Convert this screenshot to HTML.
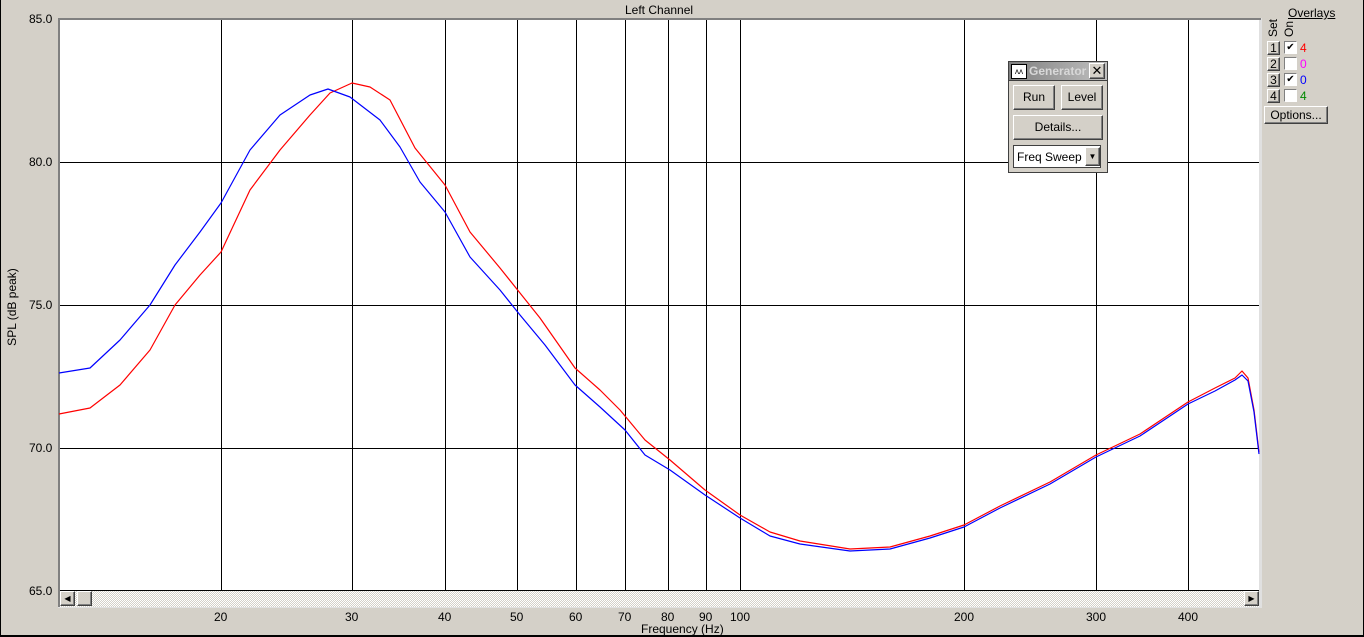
<!DOCTYPE html>
<html><head><style>
body{margin:0;width:1364px;height:637px;background:#d4d0c8;position:relative;overflow:hidden;font-family:"Liberation Sans",sans-serif;font-size:12px;color:#000}
.a{position:absolute}
.btn{position:absolute;background:#d4d0c8;border:1px solid;border-color:#fff #404040 #404040 #fff;box-shadow:inset -1px -1px 0 #808080;text-align:center;font-size:12px}
.cb{position:absolute;width:11px;height:11px;background:#fff;border:1px solid;border-color:#808080 #fff #fff #808080;font-size:10px;line-height:11px;text-align:center}
.lab{position:absolute;font-size:12px}
</style></head><body>
<div class="a" style="left:0;top:0;width:1px;height:637px;background:#000"></div>
<div class="a" style="left:0;top:635px;width:1364px;height:2px;background:#000"></div>
<div class="a" style="left:1363px;top:0;width:1px;height:637px;background:#000"></div>
<div class="lab" style="left:625px;top:3px">Left Channel</div>
<div class="lab" style="left:29px;top:12px">85.0</div>
<div class="lab" style="left:29px;top:155px">80.0</div>
<div class="lab" style="left:29px;top:298px">75.0</div>
<div class="lab" style="left:29px;top:441px">70.0</div>
<div class="lab" style="left:29px;top:584px">65.0</div>
<div class="lab" style="left:-38px;top:300px;transform:rotate(-90deg);width:100px;text-align:center">SPL (dB peak)</div>
<svg class="a" style="left:58px;top:18px" width="1204" height="590" viewBox="58 18 1204 590">
<defs><pattern id="dots" width="2" height="2" patternUnits="userSpaceOnUse"><rect width="2" height="2" fill="#d4d0c8"/><rect width="1" height="1" fill="#fff"/><rect x="1" y="1" width="1" height="1" fill="#fff"/></pattern></defs>
<rect x="58" y="18" width="1204" height="590" fill="#e0e0e0"/>
<rect x="60" y="20" width="1199" height="571" fill="#fff"/>
<rect x="58" y="18" width="1203" height="2" fill="#808080"/>
<rect x="58" y="18" width="2" height="589" fill="#808080"/>
<g stroke="#000" stroke-width="1">
<line x1="60" x2="1259" y1="162.5" y2="162.5"/><line x1="60" x2="1259" y1="305.5" y2="305.5"/><line x1="60" x2="1259" y1="448.5" y2="448.5"/><line x1="60" x2="1259" y1="590.5" y2="590.5"/>
<line x1="221.5" x2="221.5" y1="20" y2="591"/><line x1="352.5" x2="352.5" y1="20" y2="591"/><line x1="445.5" x2="445.5" y1="20" y2="591"/><line x1="517.5" x2="517.5" y1="20" y2="591"/><line x1="576.5" x2="576.5" y1="20" y2="591"/><line x1="625.5" x2="625.5" y1="20" y2="591"/><line x1="668.5" x2="668.5" y1="20" y2="591"/><line x1="706.5" x2="706.5" y1="20" y2="591"/><line x1="740.5" x2="740.5" y1="20" y2="591"/><line x1="964.5" x2="964.5" y1="20" y2="591"/><line x1="1096.5" x2="1096.5" y1="20" y2="591"/><line x1="1188.5" x2="1188.5" y1="20" y2="591"/>
</g>
<polyline fill="none" stroke="#f00" stroke-width="1.2" stroke-linejoin="round" points="59,414 90,408 120,385 150,350 175,305 200,275 221,252 250,190 280,150 310,115 330,93 352,83 370,87 390,100 415,148 445,185 470,232 500,268 520,293 540,318 575,368 600,390 620,410 645,440 670,460 705,490 740,515 770,532 800,541 850,549 890,547 930,536 964,525 1000,506 1050,482 1096,455 1140,434 1188,402 1215,388 1235,378 1242,371 1248,378 1254,410 1259,452"/>
<polyline fill="none" stroke="#00f" stroke-width="1.2" stroke-linejoin="round" points="59,373 90,368 120,340 150,305 175,265 200,232 221,203 250,150 280,115 310,95 328,89 350,97 380,120 400,147 420,182 445,212 470,257 500,290 520,315 545,345 575,385 600,407 625,430 645,455 670,470 705,495 740,518 770,536 800,544 850,551 890,549 930,538 964,527 1000,508 1050,484 1096,457 1140,436 1188,404 1215,391 1235,380 1242,375 1248,381 1254,412 1259,454"/>
<rect x="60" y="591" width="1199" height="16" fill="url(#dots)"/>
</svg>
<div class="btn" style="left:60px;top:591px;width:13px;height:13px;font-size:8px;line-height:13px">◀</div>
<div class="btn" style="left:77px;top:591px;width:13px;height:13px"></div>
<div class="btn" style="left:1244px;top:591px;width:13px;height:13px;font-size:8px;line-height:13px">▶</div>
<div class="lab" style="left:214px;top:610px">20</div>
<div class="lab" style="left:345px;top:610px">30</div>
<div class="lab" style="left:438px;top:610px">40</div>
<div class="lab" style="left:510px;top:610px">50</div>
<div class="lab" style="left:569px;top:610px">60</div>
<div class="lab" style="left:618px;top:610px">70</div>
<div class="lab" style="left:661px;top:610px">80</div>
<div class="lab" style="left:699px;top:610px">90</div>
<div class="lab" style="left:730px;top:610px">100</div>
<div class="lab" style="left:954px;top:610px">200</div>
<div class="lab" style="left:1086px;top:610px">300</div>
<div class="lab" style="left:1178px;top:610px">400</div>
<div class="lab" style="left:641px;top:622px">Frequency (Hz)</div>
<div class="a" style="left:1008px;top:61px;width:98px;height:110px;background:#d4d0c8;border:1px solid #404040">
<div class="a" style="left:0;top:0;width:98px;height:18px;background:linear-gradient(90deg,#808080,#c0c0c0);border-bottom:1px solid #404040"></div>
<div class="a" style="left:2px;top:2px;width:14px;height:13px;background:#fff;border:1px solid #000;font-size:8px;line-height:13px;text-align:center">ʌʌ</div>
<div class="a" style="left:20px;top:2px;color:#d8d8d8;font-weight:bold;font-size:12px">Generator</div>
<div class="btn" style="left:80px;top:1px;width:14px;height:14px;line-height:14px;font-size:13px">✕</div>
<div class="btn" style="left:4px;top:23px;width:40px;height:23px;line-height:23px">Run</div>
<div class="btn" style="left:52px;top:23px;width:40px;height:23px;line-height:23px">Level</div>
<div class="btn" style="left:4px;top:53px;width:88px;height:23px;line-height:23px">Details...</div>
<div class="a" style="left:4px;top:83px;width:86px;height:21px;background:#fff;border:1px solid #404040"><span class="a" style="left:3px;top:4px">Freq Sweep</span>
<div class="btn" style="left:71px;top:1px;width:13px;height:17px;font-size:8px;line-height:17px">▼</div></div>
</div>
<div class="lab" style="left:1288px;top:6px;text-decoration:underline">Overlays</div>
<div class="lab" style="left:1266px;top:37px;transform:rotate(-90deg);transform-origin:left top">Set</div>
<div class="lab" style="left:1282px;top:37px;transform:rotate(-90deg);transform-origin:left top">On</div>
<div class="btn" style="left:1267px;top:41px;width:11px;height:12px;line-height:12px">1</div>
<div class="btn" style="left:1267px;top:57px;width:11px;height:12px;line-height:12px">2</div>
<div class="btn" style="left:1267px;top:73px;width:11px;height:12px;line-height:12px">3</div>
<div class="btn" style="left:1267px;top:89px;width:11px;height:12px;line-height:12px">4</div>
<div class="cb" style="left:1284px;top:41px">✔</div>
<div class="cb" style="left:1284px;top:57px"></div>
<div class="cb" style="left:1284px;top:73px">✔</div>
<div class="cb" style="left:1284px;top:89px"></div>
<div class="lab" style="left:1300px;top:41px;color:#f00">4</div>
<div class="lab" style="left:1300px;top:57px;color:#f0f">0</div>
<div class="lab" style="left:1300px;top:73px;color:#00f">0</div>
<div class="lab" style="left:1300px;top:89px;color:#080">4</div>
<div class="btn" style="left:1264px;top:106px;width:62px;height:16px;line-height:16px">Options...</div>
</body></html>
